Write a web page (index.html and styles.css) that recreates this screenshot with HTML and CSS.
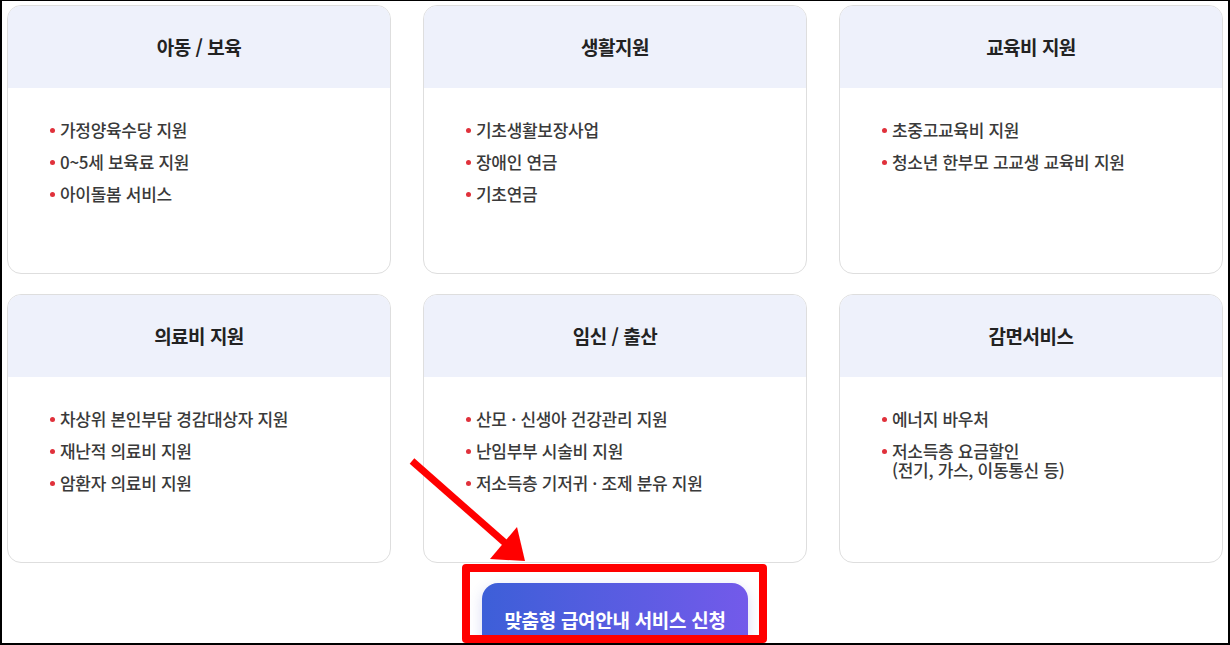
FILE: index.html
```html
<!DOCTYPE html>
<html lang="ko">
<head>
<meta charset="utf-8">
<link rel="stylesheet" href="styles.css">
</head>
<body>
<div class="page">
  <div class="grid">
    <section class="card">
      <h3 class="card-title">아동 / 보육</h3>
      <ul class="list">
        <li>가정양육수당 지원</li>
        <li>0~5세 보육료 지원</li>
        <li>아이돌봄 서비스</li>
      </ul>
    </section>
    <section class="card">
      <h3 class="card-title">생활지원</h3>
      <ul class="list">
        <li>기초생활보장사업</li>
        <li>장애인 연금</li>
        <li>기초연금</li>
      </ul>
    </section>
    <section class="card">
      <h3 class="card-title">교육비 지원</h3>
      <ul class="list">
        <li>초중고교육비 지원</li>
        <li>청소년 한부모 고교생 교육비 지원</li>
      </ul>
    </section>
    <section class="card">
      <h3 class="card-title">의료비 지원</h3>
      <ul class="list">
        <li>차상위 본인부담 경감대상자 지원</li>
        <li>재난적 의료비 지원</li>
        <li>암환자 의료비 지원</li>
      </ul>
    </section>
    <section class="card">
      <h3 class="card-title">임신 / 출산</h3>
      <ul class="list">
        <li>산모 · 신생아 건강관리 지원</li>
        <li>난임부부 시술비 지원</li>
        <li>저소득층 기저귀 · 조제 분유 지원</li>
      </ul>
    </section>
    <section class="card">
      <h3 class="card-title">감면서비스</h3>
      <ul class="list">
        <li>에너지 바우처</li>
        <li>저소득층 요금할인<br>(전기, 가스, 이동통신 등)</li>
      </ul>
    </section>
  </div>
  <div class="cta">
    <a class="cta-btn" href="#">맞춤형 급여안내 서비스 신청</a>
  </div>
  <div class="highlight-box"></div>
  <svg class="arrow" width="140" height="120" viewBox="0 0 140 120" aria-hidden="true">
    <line x1="8" y1="6" x2="108" y2="94" stroke="#ff0000" stroke-width="7"/>
    <polygon points="121,106 86,104 113,72" fill="#ff0000"/>
  </svg>
  <div class="frame"></div>
</div>
</body>
</html>
```

FILE: styles.css
```css
* { box-sizing: border-box; }
html, body { margin: 0; padding: 0; background: #fff; }
body {
  font-family: "Noto Sans CJK KR", "Noto Sans", sans-serif;
  color: #333;
  overflow: hidden;
}
.page {
  position: relative;
  width: 1230px;
  height: 645px;
  padding: 5px 0 0 7px;
}
.grid {
  display: grid;
  grid-template-columns: repeat(3, 384px);
  column-gap: 32px;
  row-gap: 20px;
}
.card {
  height: 269px;
  border: 1px solid #dedede;
  border-radius: 14px;
  overflow: hidden;
  background: #fff;
}
.card-title {
  margin: 0;
  height: 82px;
  background: #eef1fb;
  display: flex;
  align-items: center;
  justify-content: center;
  font-size: 19px;
  font-weight: 700;
  color: #222;
  letter-spacing: -0.5px;
  padding-bottom: 1px;
}
.list {
  list-style: none;
  margin: 0;
  padding: 32px 0 0 52px;
}
.list li {
  position: relative;
  font-size: 17px;
  font-weight: 500;
  line-height: 19px;
  color: #3a3a3a;
  letter-spacing: -0.3px;
  margin-bottom: 13px;
}
.list li::before {
  content: "";
  position: absolute;
  left: -10px;
  top: 8px;
  width: 5px;
  height: 5px;
  border-radius: 50%;
  background: #e0313b;
}
.cta {
  display: flex;
  justify-content: center;
  width: 1216px;
  padding-top: 20px;
}
.cta-btn {
  display: block;
  width: 266px;
  padding: 25px 0;
  border-radius: 16px;
  background: linear-gradient(90deg, #3d5fd8, #735aea);
  color: #fff;
  font-size: 19px;
  font-weight: 700;
  line-height: 24px;
  letter-spacing: -0.3px;
  text-align: center;
  text-decoration: none;
  box-shadow: 0 4px 14px rgba(70, 80, 200, 0.2);
}
.highlight-box {
  position: absolute;
  left: 462px;
  top: 564px;
  width: 305px;
  height: 79px;
  border: 8px solid #ff0000;
  border-radius: 4px;
}
.arrow {
  position: absolute;
  left: 404px;
  top: 455px;
}
.frame {
  position: absolute;
  left: 0;
  top: 0;
  width: 1230px;
  height: 645px;
  border-top: 1px solid #000;
  border-left: 2px solid #000;
  border-right: 2px solid #000;
  border-bottom: 2px solid #000;
  pointer-events: none;
}
```
